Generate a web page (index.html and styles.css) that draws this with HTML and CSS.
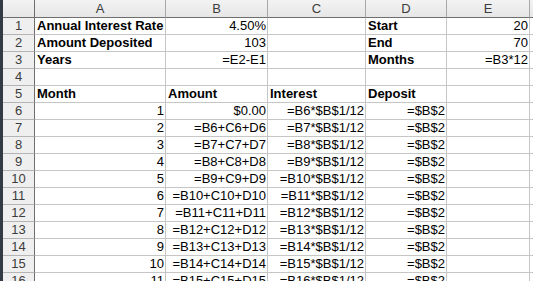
FILE: index.html
```html
<!DOCTYPE html>
<html>
<head>
<meta charset="utf-8">
<link rel="stylesheet" href="styles.css">
</head>
<body>
<div class="app">
  <div class="edge"></div>
  <div class="sheet">
    <div class="corner"></div>
    <div class="ch">A</div><div class="ch">B</div><div class="ch">C</div><div class="ch">D</div><div class="ch">E</div><div class="ch tail"></div>

    <div class="rh">1</div><div class="c b">Annual Interest Rate</div><div class="c r">4.50%</div><div class="c"></div><div class="c b">Start</div><div class="c r">20</div><div class="c tail"></div>
    <div class="rh">2</div><div class="c b">Amount Deposited</div><div class="c r">103</div><div class="c"></div><div class="c b">End</div><div class="c r">70</div><div class="c tail"></div>
    <div class="rh">3</div><div class="c b">Years</div><div class="c r">=E2-E1</div><div class="c"></div><div class="c b">Months</div><div class="c r">=B3*12</div><div class="c tail"></div>
    <div class="rh">4</div><div class="c"></div><div class="c"></div><div class="c"></div><div class="c"></div><div class="c"></div><div class="c tail"></div>
    <div class="rh">5</div><div class="c b">Month</div><div class="c b">Amount</div><div class="c b">Interest</div><div class="c b">Deposit</div><div class="c"></div><div class="c tail"></div>
    <div class="rh">6</div><div class="c r">1</div><div class="c r">$0.00</div><div class="c r">=B6*$B$1/12</div><div class="c r">=$B$2</div><div class="c"></div><div class="c tail"></div>
    <div class="rh">7</div><div class="c r">2</div><div class="c r">=B6+C6+D6</div><div class="c r">=B7*$B$1/12</div><div class="c r">=$B$2</div><div class="c"></div><div class="c tail"></div>
    <div class="rh">8</div><div class="c r">3</div><div class="c r">=B7+C7+D7</div><div class="c r">=B8*$B$1/12</div><div class="c r">=$B$2</div><div class="c"></div><div class="c tail"></div>
    <div class="rh">9</div><div class="c r">4</div><div class="c r">=B8+C8+D8</div><div class="c r">=B9*$B$1/12</div><div class="c r">=$B$2</div><div class="c"></div><div class="c tail"></div>
    <div class="rh">10</div><div class="c r">5</div><div class="c r">=B9+C9+D9</div><div class="c r">=B10*$B$1/12</div><div class="c r">=$B$2</div><div class="c"></div><div class="c tail"></div>
    <div class="rh">11</div><div class="c r">6</div><div class="c r">=B10+C10+D10</div><div class="c r">=B11*$B$1/12</div><div class="c r">=$B$2</div><div class="c"></div><div class="c tail"></div>
    <div class="rh">12</div><div class="c r">7</div><div class="c r">=B11+C11+D11</div><div class="c r">=B12*$B$1/12</div><div class="c r">=$B$2</div><div class="c"></div><div class="c tail"></div>
    <div class="rh">13</div><div class="c r">8</div><div class="c r">=B12+C12+D12</div><div class="c r">=B13*$B$1/12</div><div class="c r">=$B$2</div><div class="c"></div><div class="c tail"></div>
    <div class="rh">14</div><div class="c r">9</div><div class="c r">=B13+C13+D13</div><div class="c r">=B14*$B$1/12</div><div class="c r">=$B$2</div><div class="c"></div><div class="c tail"></div>
    <div class="rh">15</div><div class="c r">10</div><div class="c r">=B14+C14+D14</div><div class="c r">=B15*$B$1/12</div><div class="c r">=$B$2</div><div class="c"></div><div class="c tail"></div>
    <div class="rh">16</div><div class="c r">11</div><div class="c r">=B15+C15+D15</div><div class="c r">=B16*$B$1/12</div><div class="c r">=$B$2</div><div class="c"></div><div class="c tail"></div>
  </div>
</div>
</body>
</html>
```
FILE: styles.css
```css
html, body {
  margin: 0;
  padding: 0;
  background: #ffffff;
  overflow: hidden;
}
.app {
  display: flex;
  width: 533px;
  height: 281px;
  overflow: hidden;
}
.edge {
  width: 3px;
  flex: none;
  background: #323a46;
}
.sheet {
  display: grid;
  grid-template-columns: 32px 131px 102px 98px 81px 83px 40px;
  grid-template-rows: 18px repeat(16, 17px);
  font-family: "Liberation Sans", Arial, sans-serif;
  font-size: 13px;
  color: #000;
  flex: none;
}
.corner, .ch {
  background: linear-gradient(#f3f3f3, #e6e6e6);
  border-right: 1px solid #a8a8a8;
  border-bottom: 1px solid #6e6e6e;
}
.corner {
  border-right-color: #6e6e6e;
}
.ch {
  color: #3c3c3c;
  text-align: center;
  line-height: 17px;
}
.rh {
  background: #efefef;
  border-right: 1px solid #6e6e6e;
  border-bottom: 1px solid #b4b4b4;
  color: #3c3c3c;
  text-align: center;
  line-height: 16px;
}
.c {
  border-right: 1px solid #c6c6c6;
  border-bottom: 1px solid #c6c6c6;
  line-height: 16px;
  padding: 0 1px 0 2px;
  white-space: nowrap;
  overflow: hidden;
}
.b {
  font-weight: bold;
}
.r {
  text-align: right;
}
```
